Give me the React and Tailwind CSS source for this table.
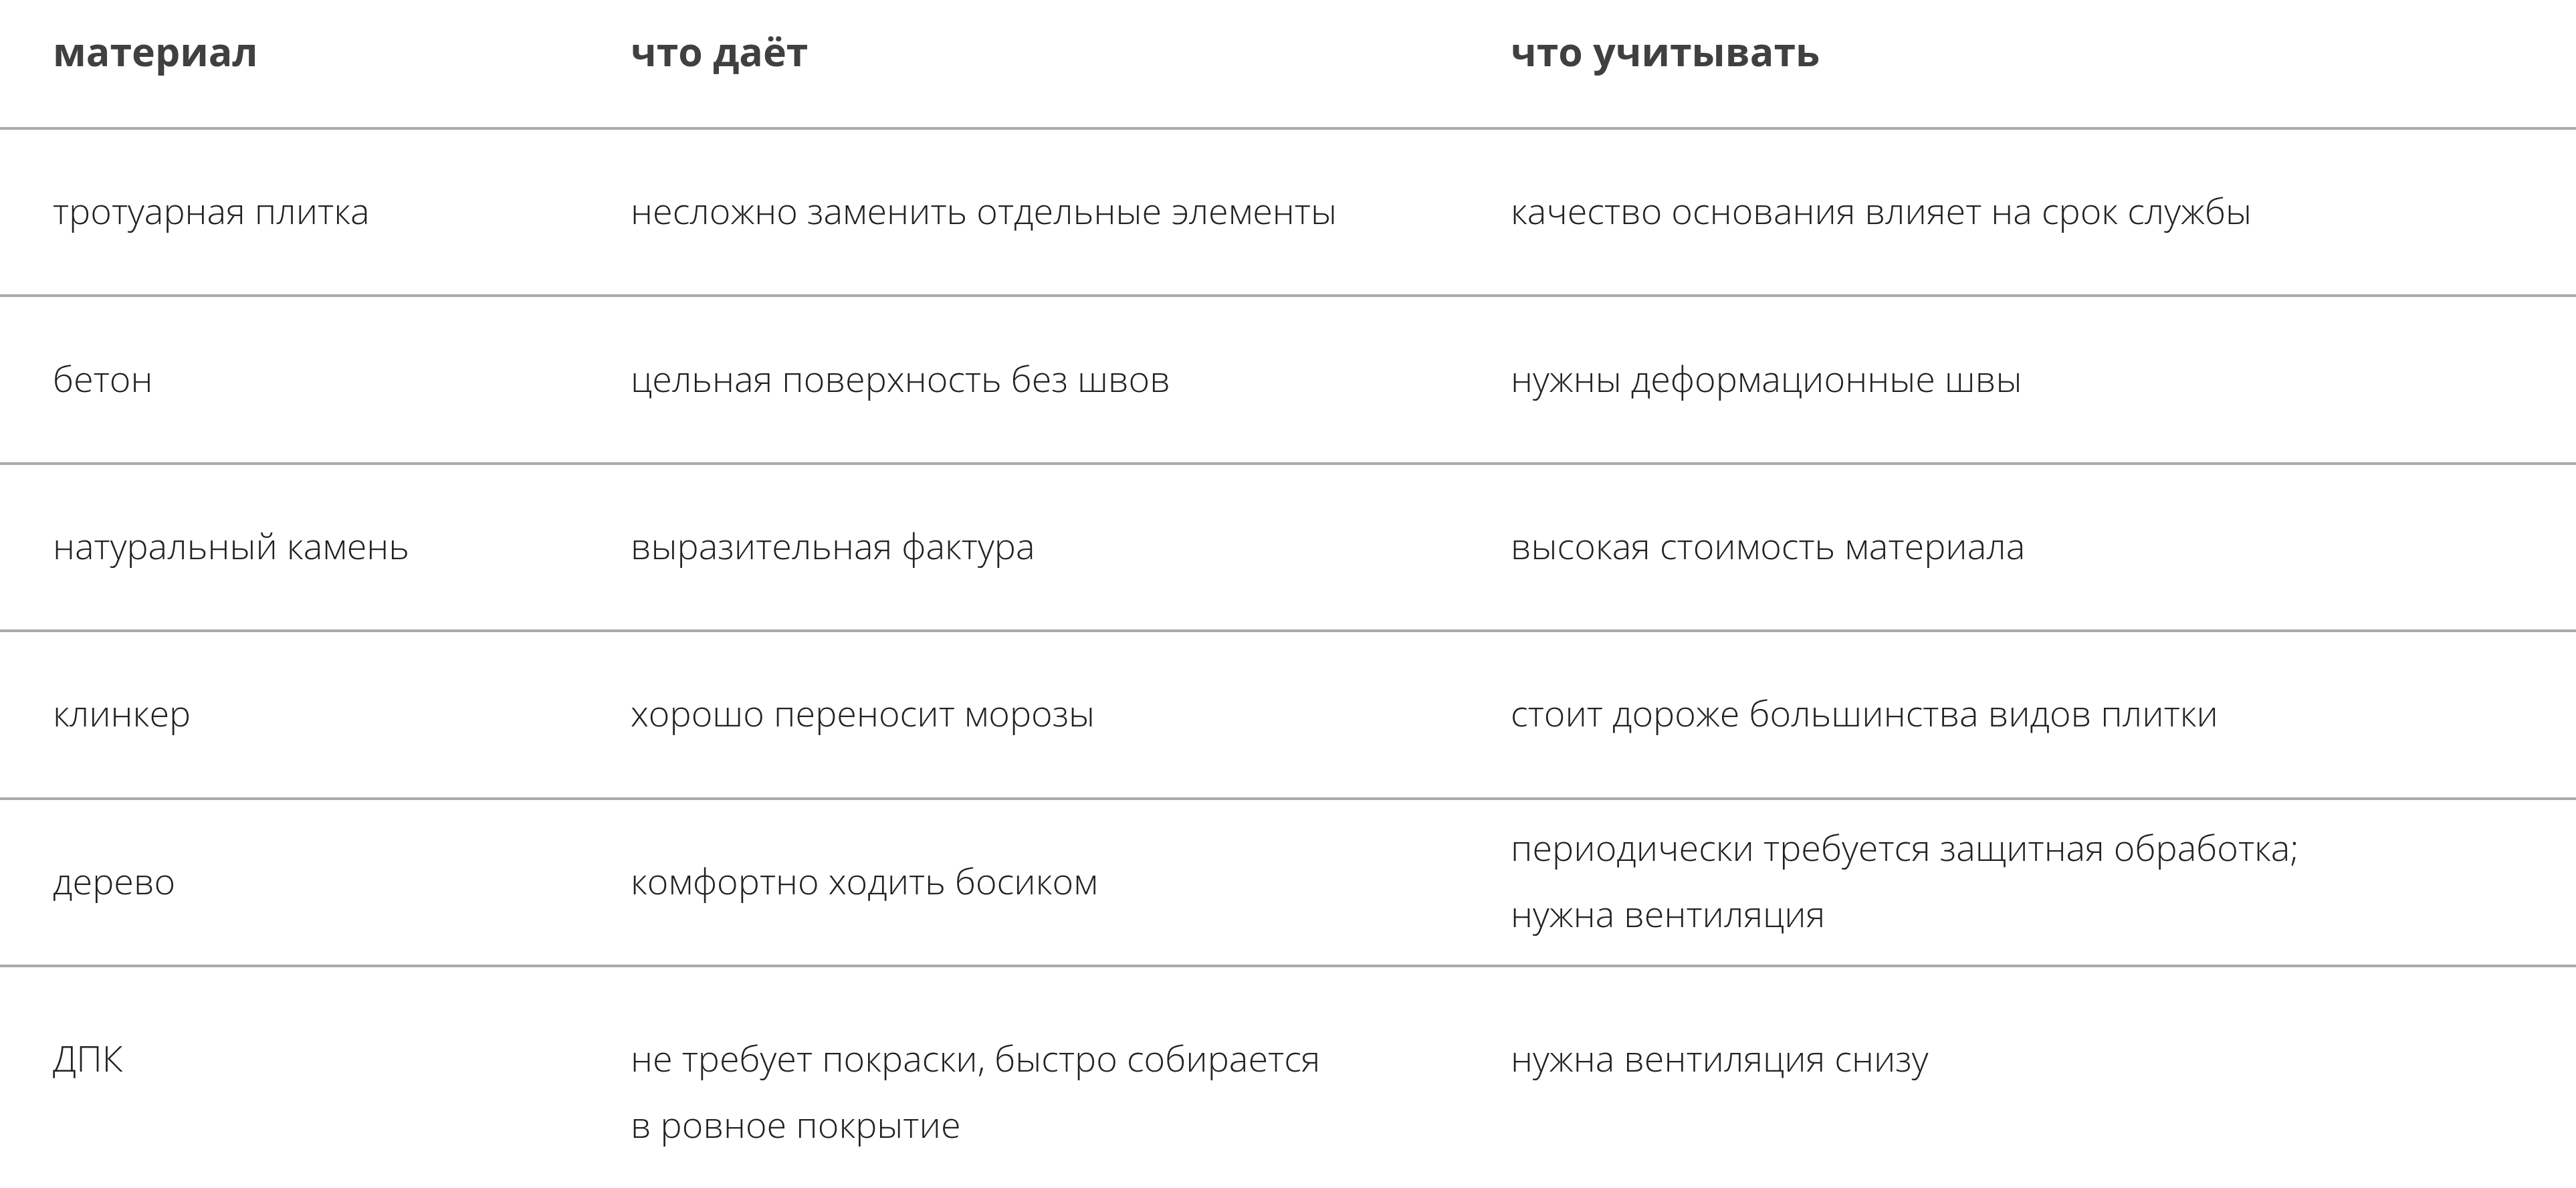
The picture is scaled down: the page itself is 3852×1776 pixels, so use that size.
const rows = [
  {
    material: "тротуарная плитка",
    gives: "несложно заменить отдельные элементы",
    notes: "качество основания влияет на срок службы",
  },
  { material: "бетон", gives: "цельная поверхность без швов", notes: "нужны деформационные швы" },
  { material: "натуральный камень", gives: "выразительная фактура", notes: "высокая стоимость материала" },
  { material: "клинкер", gives: "хорошо переносит морозы", notes: "стоит дороже большинства видов плитки" },
  {
    material: "дерево",
    gives: "комфортно ходить босиком",
    notes: ["периодически требуется защитная обработка;", "нужна вентиляция"],
  },
];

const Lines = ({ value }) =>
  Array.isArray(value) ? (
    <span>
      {value.map((line, i) => (
        <span key={i} className="block">
          {line}
        </span>
      ))}
    </span>
  ) : (
    <span>{value}</span>
  );

export default function App() {
  return (
    <div
      className="w-full bg-white text-[#222222]"
      style={{ fontFamily: '"Open Sans", "Noto Sans", sans-serif' }}
    >
      {/* header */}
      <div className="grid grid-cols-[864px_1316px_1fr] h-[194px] pt-[36px] pl-[79px] border-b-4 border-[#aaaaaa] text-[59px] leading-[80px] font-bold text-[#404040]">
        <div>материал</div>
        <div>что даёт</div>
        <div>что учитывать</div>
      </div>

      {rows.map((row) => (
        <div
          key={row.material}
          className="grid grid-cols-[864px_1316px_1fr] items-center h-[250.4px] pb-[5px] pl-[79px] border-b-4 border-[#aaaaaa] text-[54px] leading-[99px] font-light"
        >
          <Lines value={row.material} />
          <Lines value={row.gives} />
          <Lines value={row.notes} />
        </div>
      ))}

      {/* last row, cells sit at the top */}
      <div className="grid grid-cols-[864px_1316px_1fr] items-start pt-[86px] pb-[76px] pl-[79px] text-[54px] leading-[99px] font-light">
        <Lines value="ДПК" />
        <Lines value={["не требует покраски, быстро собирается", "в ровное покрытие"]} />
        <Lines value="нужна вентиляция снизу" />
      </div>
    </div>
  );
}
